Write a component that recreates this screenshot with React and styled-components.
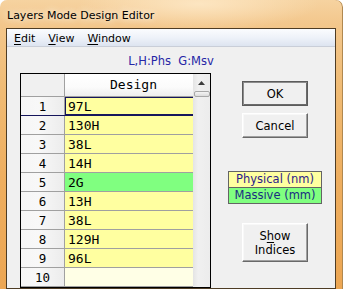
import styled, { createGlobalStyle } from "styled-components"

const GlobalStyle = createGlobalStyle`
  html, body {
    margin: 0;
    padding: 0;
    background: #ffffff;
  }
  body {
    width: 343px;
    height: 289px;
    overflow: hidden;
  }
`

const rows = [
  { n: 1, v: "97L", kind: "phys", selected: true },
  { n: 2, v: "130H", kind: "phys" },
  { n: 3, v: "38L", kind: "phys" },
  { n: 4, v: "14H", kind: "phys" },
  { n: 5, v: "2G", kind: "mass" },
  { n: 6, v: "13H", kind: "phys" },
  { n: 7, v: "38L", kind: "phys" },
  { n: 8, v: "129H", kind: "phys" },
  { n: 9, v: "96L", kind: "phys" },
  { n: 10, v: "", kind: "empty" },
]

const cellColors = {
  phys: "#ffffa0",
  mass: "#80ff80",
  empty: "#ffffe6",
}

const Window = styled.div`
  width: 343px;
  height: 289px;
  box-sizing: border-box;
  display: flex;
  flex-direction: column;
  padding: 0 7px 0 6px;
  border-radius: 7px 7px 0 0;
  overflow: hidden;
  font-family: "DejaVu Sans", "Liberation Sans", sans-serif;
  background:
    radial-gradient(ellipse 120px 26px at 58% 4px, rgba(255, 236, 205, 0.75), rgba(255, 236, 205, 0) 100%),
    linear-gradient(180deg, #f6d3a0 0px, #f3c78c 24px, #f0bb74 90px, #eeae5f 180px, #eca653 289px);
  box-shadow: inset -1px 0 0 #b08850;
`

const TitleBar = styled.div`
  height: 28px;
  box-sizing: border-box;
  display: flex;
  align-items: center;
  padding: 2px 0 0 1px;
  font-size: 11px;
  color: #000;
  text-shadow: 0 0 6px rgba(255, 248, 235, 0.95), 0 0 10px rgba(255, 248, 235, 0.9);
`

const Client = styled.div`
  flex: 1;
  display: flex;
  flex-direction: column;
  border: 1px solid #4e3c24;
  background: #f0f0f0;
  overflow: hidden;
`

const MenuBar = styled.div`
  height: 19px;
  box-sizing: border-box;
  display: flex;
  align-items: center;
  gap: 13px;
  padding: 1px 0 0 7px;
  font-size: 11px;
  color: #000;
  background: linear-gradient(180deg, #fbfcfe 0%, #eef2f9 50%, #dde4f0 100%);
  border-bottom: 1px solid #c9ced8;
`

const MenuItem = styled.span`
  u {
    text-decoration: underline;
    text-underline-offset: 2px;
  }
`

const Body = styled.div`
  display: flex;
  flex-direction: column;
`

const Legend = styled.div`
  margin-top: 7px;
  height: 14px;
  line-height: 14px;
  text-align: center;
  font-size: 11.5px;
  color: #2626a6;
  white-space: pre;
`

const Content = styled.div`
  display: flex;
  align-items: flex-start;
  margin-top: 5px;
`

const Grid = styled.div`
  margin-left: 13px;
  width: 191px;
  box-sizing: border-box;
  border: 1px solid #000;
  display: flex;
  font-family: "DejaVu Sans Mono", "Liberation Mono", monospace;
`

const Table = styled.div`
  width: 172px;
  display: flex;
  flex-direction: column;
`

const HeaderRow = styled.div`
  display: flex;
  height: 23px;
  box-sizing: border-box;
  border-bottom: 1px solid #a0a0a0;
`

const Corner = styled.div`
  width: 44px;
  box-sizing: border-box;
  border-right: 1px solid #a0a0a0;
  background: #f0f0f0;
`

const ColHead = styled.div`
  flex: 1;
  padding-left: 9px;
  text-align: center;
  line-height: 22px;
  font-size: 13px;
  color: #000;
  background: linear-gradient(180deg, #ffffff 0%, #fbfbfb 60%, #eeeeee 100%);
`

const Row = styled.div`
  display: flex;
  height: 19px;
  box-sizing: border-box;
  border-bottom: 1px solid ${p => (p.$selected ? "#16165c" : "#a0a0a0")};
`

const RowHead = styled.div`
  width: 44px;
  box-sizing: border-box;
  border-right: 1px solid #a0a0a0;
  padding-top: 2px;
  text-align: center;
  line-height: 16px;
  font-size: 12.5px;
  color: #000;
  background: linear-gradient(90deg, #f6f6f6 0%, #f8f8f8 40%, #ececec 100%);
`

const Cell = styled.div`
  flex: 1;
  box-sizing: border-box;
  padding: 2px 0 0 3px;
  line-height: 16px;
  font-size: 13px;
  color: #000;
  background: ${p => cellColors[p.$kind]};
  box-shadow: ${p => (p.$selected ? "inset 1px 1px 0 #16165c, inset 0 -1px 0 #16165c" : "none")};
`

const ScrollBar = styled.div`
  width: 17px;
  display: flex;
  flex-direction: column;
  background: linear-gradient(90deg, #e4e4e4 0%, #f0f0f0 30%, #ececec 100%);
`

const ArrowButton = styled.div`
  height: 17px;
  display: flex;
  align-items: center;
  justify-content: center;
`

const Thumb = styled.div`
  height: 6px;
  margin: 0 0 0 1px;
  box-sizing: border-box;
  border: 1px solid #a8a8a8;
  border-radius: 2px;
  background: linear-gradient(180deg, #f4f4f4, #dcdcdc);
`

const Side = styled.div`
  width: 94px;
  margin-left: 17px;
  display: flex;
  flex-direction: column;
  align-items: center;
  padding-top: 8px;
`

const Button = styled.button`
  width: 66px;
  height: ${p => p.$h}px;
  margin-bottom: ${p => p.$mb}px;
  box-sizing: border-box;
  padding: 0;
  font-family: "DejaVu Sans", "Liberation Sans", sans-serif;
  font-size: 11.5px;
  line-height: 14px;
  color: #000;
  background: #f0f0f0;
  border: 1px solid;
  border-color: ${p => (p.$default ? "#5c5c5c" : "#ffffff #696969 #696969 #ffffff")};
  box-shadow: ${p =>
    p.$default
      ? "inset 1px 1px 0 #8c8c8c, inset -1px -1px 0 #6a6a6a"
      : "inset -1px -1px 0 #a0a0a0, inset 1px 1px 0 #f8f8f8"};
  u {
    text-decoration: underline;
    text-underline-offset: 2px;
  }
`

const KeyBox = styled.div`
  width: 94px;
  box-sizing: border-box;
  border: 1px solid #646464;
  margin-bottom: 19px;
  font-size: 11.5px;
`

const KeyRow = styled.div`
  height: ${p => (p.$last ? 15 : 16)}px;
  box-sizing: border-box;
  line-height: 15px;
  text-align: center;
  color: ${p => p.$color};
  background: ${p => p.$bg};
  border-bottom: ${p => (p.$last ? "none" : "1px solid #646464")};
`

export default function App() {
  return (
    <>
      <GlobalStyle />
      <Window>
        <TitleBar>Layers Mode Design Editor</TitleBar>
        <Client>
          <MenuBar>
            <MenuItem><u>E</u>dit</MenuItem>
            <MenuItem><u>V</u>iew</MenuItem>
            <MenuItem><u>W</u>indow</MenuItem>
          </MenuBar>
          <Body>
            <Legend>{"L,H:Phs  G:Msv"}</Legend>
            <Content>
              <Grid>
                <Table>
                  <HeaderRow>
                    <Corner />
                    <ColHead>Design</ColHead>
                  </HeaderRow>
                  {rows.map(r => (
                    <Row key={r.n} $selected={r.selected}>
                      <RowHead>{r.n}</RowHead>
                      <Cell $kind={r.kind} $selected={r.selected}>{r.v}</Cell>
                    </Row>
                  ))}
                </Table>
                <ScrollBar>
                  <ArrowButton>
                    <svg width="7" height="4" viewBox="0 0 7 4">
                      <path d="M0 4 L3.5 0 L7 4 Z" fill="#3c3c3c" />
                    </svg>
                  </ArrowButton>
                  <Thumb />
                </ScrollBar>
              </Grid>
              <Side>
                <Button $h={25} $mb={7} $default>OK</Button>
                <Button $h={25} $mb={33}>Cancel</Button>
                <KeyBox>
                  <KeyRow $bg="#ffffa0" $color="#2c1c8c">Physical (nm)</KeyRow>
                  <KeyRow $bg="#80ff80" $color="#1a2c80" $last>Massive (mm)</KeyRow>
                </KeyBox>
                <Button $h={39} $mb={0}>S<u>h</u>ow<br />Indices</Button>
              </Side>
            </Content>
          </Body>
        </Client>
      </Window>
    </>
  )
}
